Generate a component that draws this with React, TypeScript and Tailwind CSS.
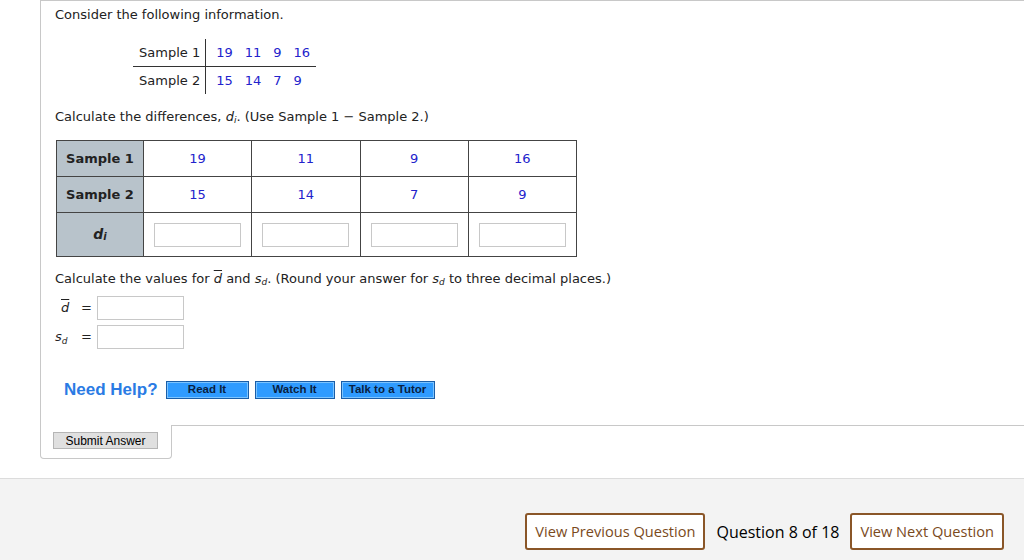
import React from "react";

const V = { fontFamily: '"DejaVu Sans", Verdana, sans-serif' };
const A = { fontFamily: '"Liberation Sans", Arial, sans-serif' };
const O = { fontFamily: '"Open Sans", sans-serif' };

function Di() {
  return (
    <span className="italic font-bold text-[14px]">
      d<sub className="text-[10px] relative top-[1px]">i</sub>
    </span>
  );
}

function Box() {
  return <div className="w-[87px] h-[24px] border border-[#c8c8c8] bg-white" />;
}

export default function App() {
  const s1 = ["19", "11", "9", "16"];
  const s2 = ["15", "14", "7", "9"];
  return (
    <div className="w-[1024px] h-[560px] bg-white overflow-hidden flex flex-col text-[#222]" style={V}>
      <div className="ml-[40px] border-l border-t border-[#c8c8c8] h-[425px] pl-[14px] text-[13px]">
        <div className="mt-[6px] h-[16px] leading-[16px]">Consider the following information.</div>
        <div className="mt-[16px] ml-[78px] flex">
          <div className="flex flex-col">
            <div className="h-[28px] flex items-center pl-[6px] pr-[5px] border-b border-[#333]">Sample 1</div>
            <div className="h-[27px] flex items-center pl-[6px] pr-[5px]">Sample 2</div>
          </div>
          <div className="flex flex-col border-l border-[#333] w-[111px]">
            <div className="h-[28px] flex items-center pl-[10px] border-b border-[#333] text-[#2222cc] gap-[12px]">
              {s1.map((v, i) => <span key={i}>{v}</span>)}
            </div>
            <div className="h-[27px] flex items-center pl-[10px] text-[#2222cc] gap-[12px]">
              {s2.map((v, i) => <span key={i}>{v}</span>)}
            </div>
          </div>
        </div>
        <div className="mt-[15px] h-[16px] leading-[16px]">
          Calculate the differences, <span className="italic">d<sub className="text-[9px]">i</sub></span>. (Use Sample 1 − Sample 2.)
        </div>
        <div className="mt-[15px] ml-[1px] w-[521px] border border-[#444]">
          <div className="flex h-[36px] border-b border-[#444]">
            <div className="w-[87px] bg-[#b8c3cb] border-r border-[#444] flex items-center justify-center font-bold">Sample 1</div>
            {s1.map((v, i) => (
              <div key={i} className={`flex-1 flex items-center justify-center text-[#2222cc] ${i < 3 ? "border-r border-[#444]" : ""}`}>{v}</div>
            ))}
          </div>
          <div className="flex h-[36px] border-b border-[#444]">
            <div className="w-[87px] bg-[#b8c3cb] border-r border-[#444] flex items-center justify-center font-bold">Sample 2</div>
            {s2.map((v, i) => (
              <div key={i} className={`flex-1 flex items-center justify-center text-[#2222cc] ${i < 3 ? "border-r border-[#444]" : ""}`}>{v}</div>
            ))}
          </div>
          <div className="flex h-[43px]">
            <div className="w-[87px] bg-[#b8c3cb] border-r border-[#444] flex items-center justify-center"><Di /></div>
            {[0, 1, 2, 3].map((i) => (
              <div key={i} className={`flex-1 flex items-center justify-center ${i < 3 ? "border-r border-[#444]" : ""}`}>
                <Box />
              </div>
            ))}
          </div>
        </div>
        <div className="mt-[14px] h-[16px] leading-[16px]">
          Calculate the values for <span className="italic overline">d</span> and <span className="italic">s<sub className="text-[9px]">d</sub></span>. (Round your answer for <span className="italic">s<sub className="text-[9px]">d</sub></span> to three decimal places.)
        </div>
        <div className="mt-[9px] flex items-center h-[24px]">
          <span className="w-[26px] pl-[6px] italic overline">d</span>
          <span className="w-[16px]">=</span>
          <Box />
        </div>
        <div className="mt-[5px] flex items-center h-[24px]">
          <span className="w-[26px] italic">s<sub className="text-[9px]">d</sub></span>
          <span className="w-[16px]">=</span>
          <Box />
        </div>
        <div className="mt-[28px] flex items-center gap-[6px] pl-[9px]" style={A}>
          <span className="text-[#2a7be4] font-bold text-[17px] mr-[2px]">Need Help?</span>
          {[["Read It", "w-[83px]"], ["Watch It", "w-[80px]"], ["Talk to a Tutor", "w-[94px]"]].map(([t, w]) => (
            <div key={t} className={`${w} h-[18px] bg-[#2f9bff] border border-[#1a5ea8] flex items-center justify-center text-[11.5px] font-bold text-[#0a1f3f] shadow-[inset_0_0_0_1px_#7cc4ff]`}>{t}</div>
          ))}
        </div>
      </div>
      <div className="flex">
        <div className="ml-[40px] w-[132px] h-[34px] border-l border-r border-b border-[#c8c8c8] rounded-b-[4px] pl-[12px] pt-[7px]">
          <div className="w-[105px] h-[17px] bg-[#e0e0e0] border border-[#b5b5b5] flex items-center justify-center text-[12px] text-black" style={A}>Submit Answer</div>
        </div>
        <div className="flex-1 border-t border-[#c8c8c8]" />
      </div>
      <div className="mt-[19px] flex-1 bg-[#f3f3f3] border-t border-[#dcdcdc] flex items-start justify-end pr-[20px] pt-[34px] gap-[11px]" style={O}>
        <div className="h-[37px] px-[8px] border-2 border-[#8a5628] rounded-[3px] bg-white flex items-center text-[14.6px] text-[#7a4a1c]">View Previous Question</div>
        <div className="h-[37px] flex items-center text-[16px] text-black">Question 8 of 18</div>
        <div className="h-[37px] px-[8px] border-2 border-[#8a5628] rounded-[3px] bg-white flex items-center text-[14.6px] text-[#7a4a1c]">View Next Question</div>
      </div>
    </div>
  );
}
